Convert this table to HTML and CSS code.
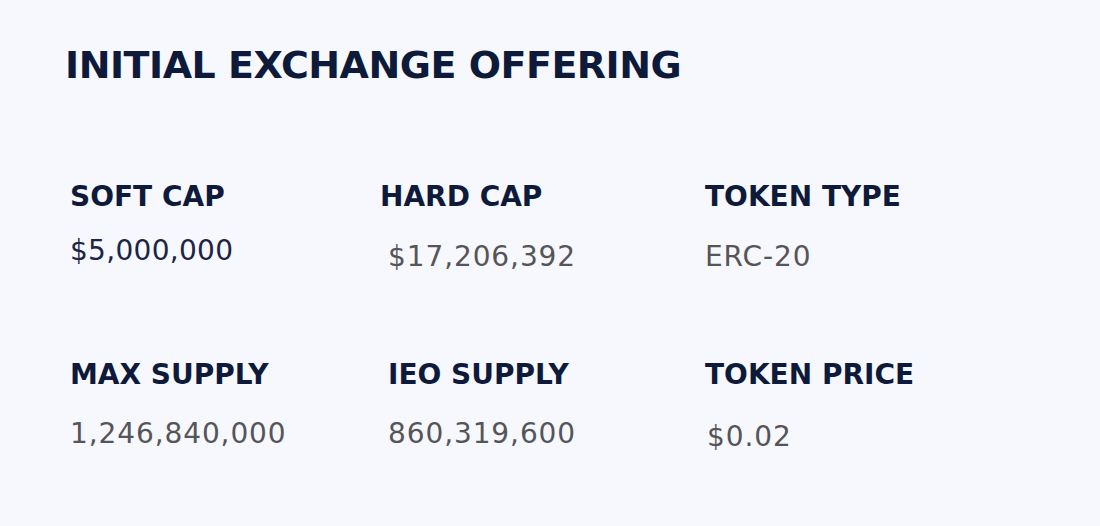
FILE: index.html
```html
<!DOCTYPE html>
<html lang="en">
<head>
<meta charset="utf-8">
<title>Initial Exchange Offering</title>
<link rel="stylesheet" href="styles.css">
</head>
<body>
<section class="ieo">
  <h1 class="ieo-title">INITIAL EXCHANGE OFFERING</h1>
  <div class="ieo-grid">
    <div class="stat">
      <h3 class="stat-label">SOFT CAP</h3>
      <p class="stat-value stat-value--dark stat-value--up">$5,000,000</p>
    </div>
    <div class="stat">
      <h3 class="stat-label stat-label--left">HARD CAP</h3>
      <p class="stat-value stat-value--row1">$17,206,392</p>
    </div>
    <div class="stat">
      <h3 class="stat-label">TOKEN TYPE</h3>
      <p class="stat-value stat-value--row1">ERC-20</p>
    </div>
    <div class="stat">
      <h3 class="stat-label">MAX SUPPLY</h3>
      <p class="stat-value">1,246,840,000</p>
    </div>
    <div class="stat">
      <h3 class="stat-label">IEO SUPPLY</h3>
      <p class="stat-value">860,319,600</p>
    </div>
    <div class="stat">
      <h3 class="stat-label">TOKEN PRICE</h3>
      <p class="stat-value stat-value--down">$0.02</p>
    </div>
  </div>
</section>
</body>
</html>
```
FILE: styles.css
```css
html, body {
  margin: 0;
  padding: 0;
  background: #f7f8fd;
}

body {
  width: 1100px;
  height: 526px;
  overflow: hidden;
  font-family: "DejaVu Sans", "Liberation Sans", sans-serif;
}

.ieo {
  padding: 42px 0 0 65px;
}

.ieo-title {
  margin: 0;
  font-size: 38px;
  line-height: 46px;
  font-weight: 700;
  letter-spacing: -0.5px;
  color: #0e1a3a;
}

.ieo-grid {
  display: grid;
  grid-template-columns: 318px 317px 1fr;
  row-gap: 86px;
  margin-top: 93px;
  padding-left: 5px;
}

.stat-label {
  margin: 0;
  font-size: 28px;
  line-height: 32px;
  font-weight: 700;
  letter-spacing: 0;
  color: #0e1a3a;
}

.stat-label--left {
  margin-left: -8px;
}

.stat-value {
  margin: 27px 0 0;
  font-size: 28px;
  line-height: 32px;
  font-weight: 400;
  letter-spacing: 0.9px;
  color: #555559;
}

.stat-value--row1 {
  margin-top: 28px;
}

.stat-value--dark {
  color: #1b2544;
  letter-spacing: 0.3px;
}

.stat-value--up {
  margin-top: 22px;
}

.stat-value--down {
  margin-top: 30px;
  margin-left: 2px;
}
```
